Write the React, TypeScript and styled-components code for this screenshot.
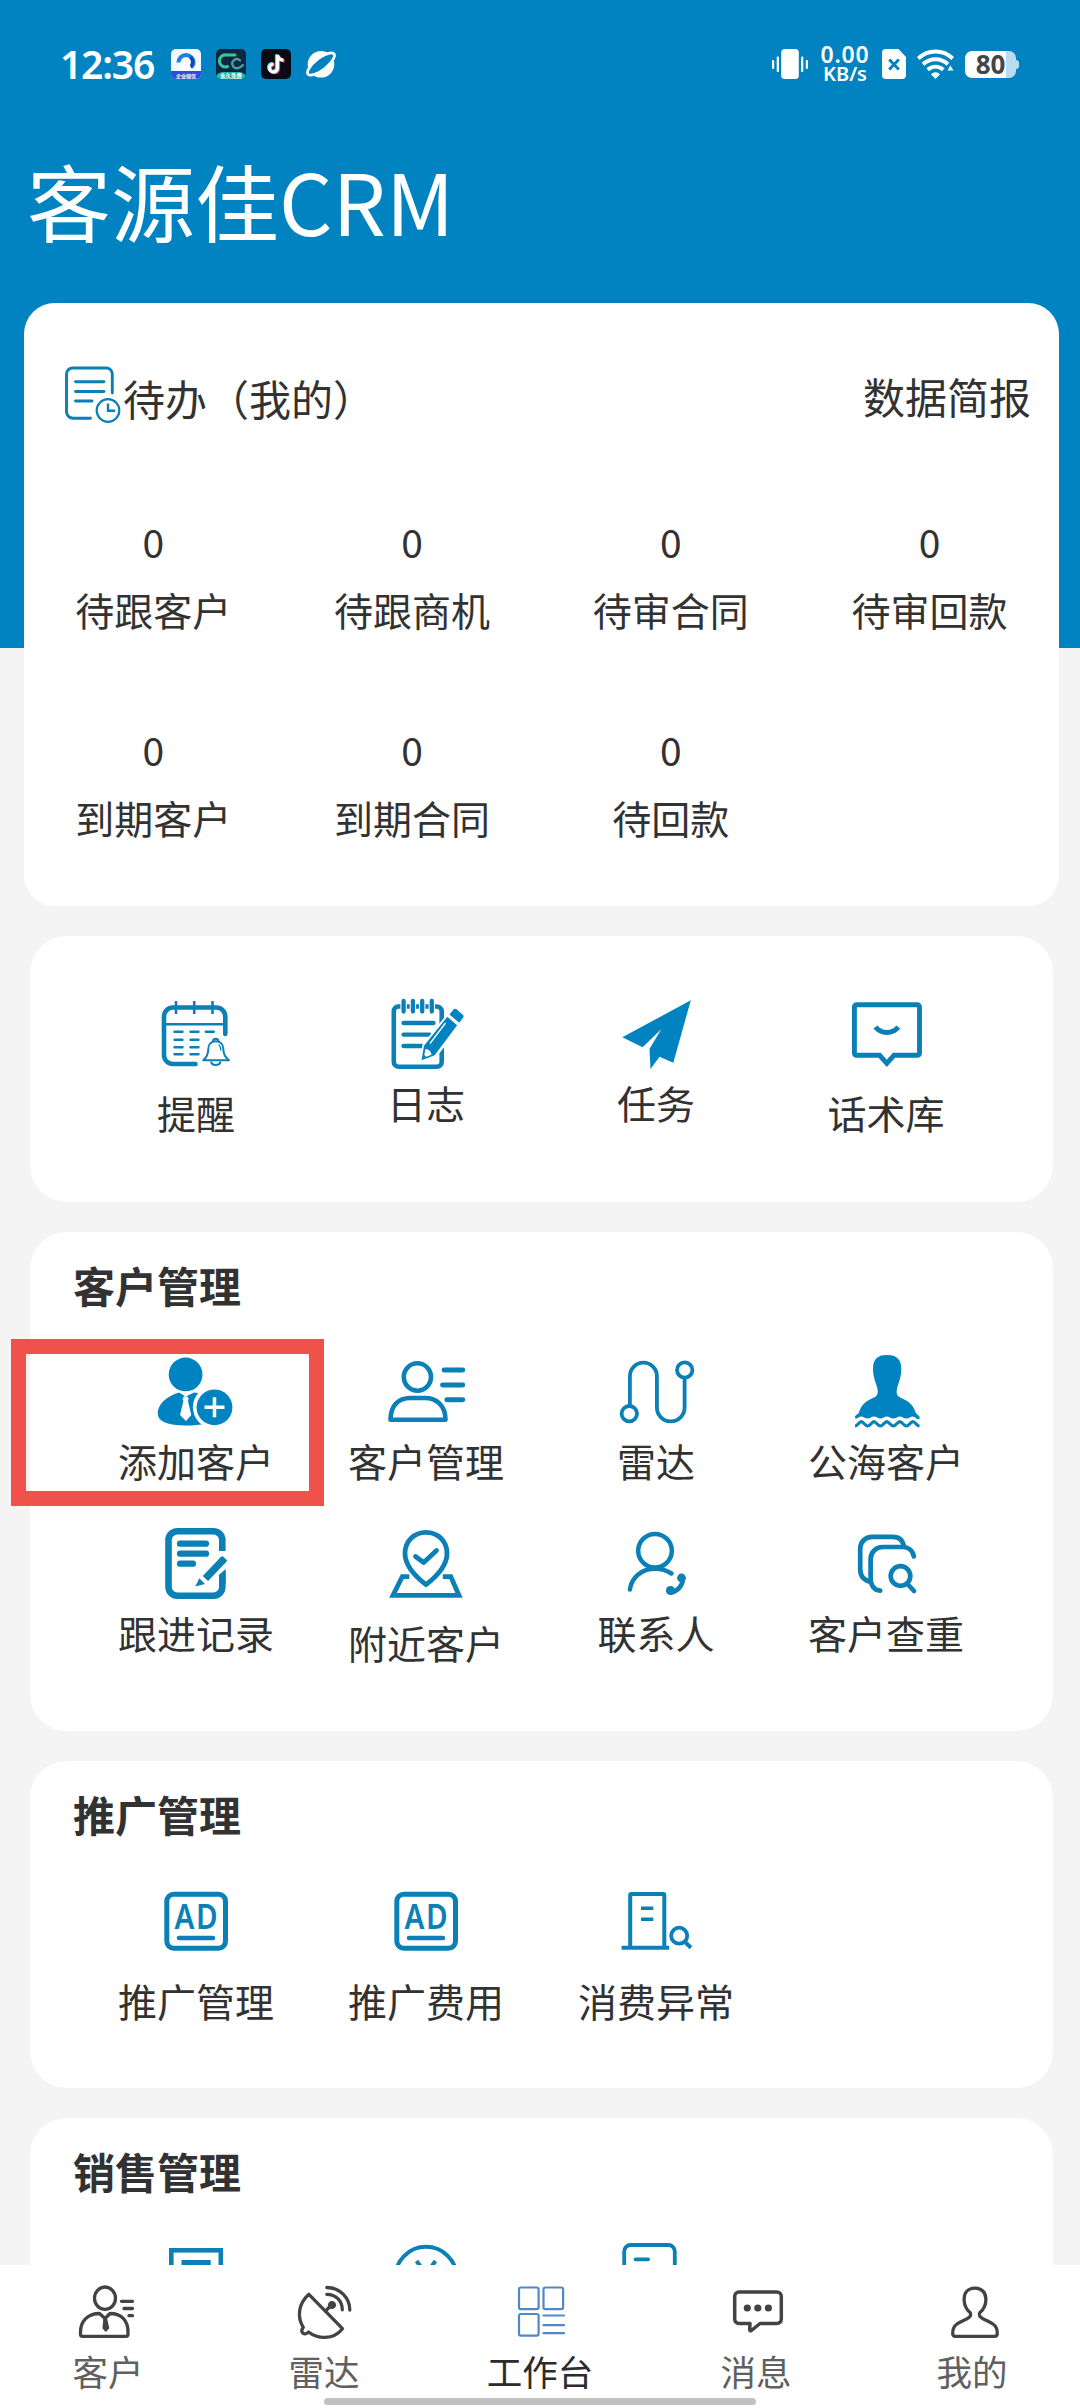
import React from 'react';
import styled, { createGlobalStyle } from 'styled-components';

const BRAND = '#0083c0';
const STROKE = '#0b80b6';
const INK = '#323232';
const TAB_INK = '#434343';

const GlobalStyle = createGlobalStyle`
  * { box-sizing: border-box; }
  body {
    margin: 0;
    font-family: 'Noto Sans CJK SC', 'Noto Sans', sans-serif;
    color: ${INK};
  }
  svg { display: block; flex: none; overflow: visible; }
`;

const Page = styled.div`
  width: 1080px;
  height: 2408px;
  display: flex;
  flex-direction: column;
  overflow: hidden;
  background: linear-gradient(${BRAND} 648px, #f4f4f4 648px);
`;

/* ---------- status bar ---------- */

const StatusBar = styled.header`
  height: 128px;
  flex: none;
  display: flex;
  align-items: center;
  justify-content: space-between;
  padding: 0 61px 0 60px;
  color: #fff;
`;

const StatusGroup = styled.div<{ $gap: number }>`
  display: flex;
  align-items: center;
  gap: ${(p) => p.$gap}px;
`;

const Clock = styled.span`
  width: 96px;
  font: 600 39px/44px 'Noto Sans', sans-serif;
  letter-spacing: -1.2px;
  white-space: nowrap;
`;

const NetSpeed = styled.div`
  width: 52px;
  display: flex;
  flex-direction: column;
  align-items: center;
  font-family: 'Liberation Sans', 'Noto Sans', sans-serif;
  font-weight: 700;
  white-space: nowrap;
`;

const NetValue = styled.span`
  font: 600 23px/20px 'Noto Sans', sans-serif;
  letter-spacing: 0.8px;
`;

const NetUnit = styled.span`
  font: 600 20px/20px 'Noto Sans', sans-serif;
`;

const Battery = styled.div`
  width: 51px;
  height: 27px;
  display: flex;
  align-items: center;
  justify-content: center;
  position: relative;
  border-radius: 7px;
  background: linear-gradient(90deg, #fff 41px, #b9dcee 41px);
  color: #454545;
  font: 700 26px/27px 'Noto Sans', sans-serif;
  margin-right: 3px;

  &::after {
    content: '';
    position: absolute;
    right: -3px;
    top: 9px;
    width: 4px;
    height: 9px;
    border-radius: 0 3px 3px 0;
    background: #b9dcee;
  }
`;

const AppTitle = styled.h1`
  height: 175px;
  flex: none;
  margin: 0;
  padding: 12px 0 0 27px;
  color: #fff;
  font-size: 84px;
  font-weight: 400;
  line-height: 120px;
`;

/* ---------- content ---------- */

const Content = styled.main`
  flex: 1;
  min-height: 0;
  overflow: hidden;
  display: flex;
  flex-direction: column;
  gap: 30px;
`;

const TodoCard = styled.section`
  flex: none;
  height: 603px;
  margin: 0 21px 0 24px;
  padding-top: 60px;
  border-radius: 31px;
  background: #fff;
`;

const TodoHeader = styled.div`
  height: 64px;
  margin-bottom: 73px;
  padding: 0 28px 0 41px;
  display: flex;
  align-items: center;
  justify-content: space-between;
  font-size: 42px;
  line-height: 60px;
`;

const TodoTitle = styled.div`
  display: flex;
  align-items: center;
  gap: 2px;
`;

const TodoText = styled.span`
  padding-top: 6px;
`;

const ReportLink = styled.a`
  padding-top: 1px;
`;

const StatGrid = styled.div`
  display: grid;
  grid-template-columns: repeat(4, 1fr);
  grid-auto-rows: 208px;
`;

const Stat = styled.div`
  display: flex;
  flex-direction: column;
  align-items: center;
  padding-top: 13px;
  gap: 13px;
`;

const StatCount = styled.span`
  font-size: 39px;
  line-height: 56px;
`;

const ItemLabel = styled.span`
  font-size: 39px;
  line-height: 54px;
  white-space: nowrap;
`;

const ToolCard = styled.section<{ $height: number }>`
  flex: none;
  height: ${(p) => p.$height}px;
  margin: 0 27px 0 30px;
  border-radius: 37px;
  background: #fff;
`;

const CardTitle = styled.h2`
  margin: 0;
  padding: 23px 0 0 43px;
  font-size: 42px;
  font-weight: 700;
  line-height: 60px;
`;

const ToolGrid = styled.div<{ $top: number }>`
  display: grid;
  grid-template-columns: repeat(4, 230px);
  grid-auto-rows: 172px;
  padding: ${(p) => p.$top}px 0 0 51px;
`;

const ToolItem = styled.div<{ $gap: number }>`
  position: relative;
  display: flex;
  flex-direction: column;
  align-items: center;
  gap: ${(p) => p.$gap}px;
`;

const Highlight = styled.div`
  position: absolute;
  left: -70px;
  top: -13px;
  width: 313px;
  height: 167px;
  border: 15px solid #ef524a;
`;

/* ---------- tab bar ---------- */

const TabBar = styled.nav`
  height: 143px;
  flex: none;
  position: relative;
  display: grid;
  grid-template-columns: repeat(5, 1fr);
  background: #fff;
`;

const Tab = styled.div<{ $active?: boolean }>`
  display: flex;
  flex-direction: column;
  align-items: center;
  padding-top: 17px;
  gap: 4px;
  color: ${(p) => (p.$active ? '#2b2b2b' : '#606060')};
  font-size: 35.5px;
  line-height: 50px;
`;

const HomeIndicator = styled.div`
  position: absolute;
  left: 324px;
  bottom: 3px;
  width: 432px;
  height: 7px;
  border-radius: 4px;
  background: #c1c1c1;
`;

/* ---------- icons ---------- */

type GlyphProps = { children: React.ReactNode; w?: number };

const ToolSvg = ({ children, w = 4.6 }: GlyphProps) => (
  <svg width="80" height="80" viewBox="0 0 80 80" fill="none" stroke={STROKE} strokeWidth={w}>
    {children}
  </svg>
);

const TabSvg = ({ children, w = 3.3 }: GlyphProps) => (
  <svg
    width="60"
    height="60"
    viewBox="0 0 60 60"
    fill="none"
    stroke={TAB_INK}
    strokeWidth={w}
    strokeLinecap="round"
    strokeLinejoin="round"
  >
    {children}
  </svg>
);

const BrowserAppIcon = () => (
  <svg width="30" height="30" viewBox="0 0 30 30">
    <clipPath id="qq"><rect width="30" height="30" rx="5" /></clipPath>
    <g clipPath="url(#qq)">
      <rect width="30" height="30" fill="#f3f9ff" />
      <path d="M7.500 13.500a7.500 7.500 0 1 1 15 0c0 2-1 3.500-2.500 4.500" fill="none" stroke="#1d7fe0" strokeWidth="4" />
      <path d="M19.500 8c3 3 3 7 0 10" fill="none" stroke="#1746b8" strokeWidth="3.500" />
      <path d="M9 20a4 4 0 0 1 3-6 4 4 0 0 1 7 2l1 5H9z" fill="#fff" />
      <path d="M0 22h30v8H0z" fill="#2c4fd8" />
      <text x="15" y="28.500" fontSize="5" fontWeight="700" fill="#fff" textAnchor="middle">企业微信</text>
    </g>
  </svg>
);

const CcAppIcon = () => (
  <svg width="30" height="30" viewBox="0 0 30 30">
    <clipPath id="cc"><rect width="30" height="30" rx="5" /></clipPath>
    <g clipPath="url(#cc)">
      <rect width="30" height="30" fill="#10263f" />
      <g fill="none" strokeLinecap="round">
        <path d="M19 6H10.500a6 6 0 1 0 1 11.500" stroke="#31c9a0" strokeWidth="3" />
        <path d="M24 11.500a4.500 4.500 0 1 0-2 7.500c2 0 4-2 5-3" stroke="#3fa3ac" strokeWidth="2.400" />
      </g>
      <path d="M0 27c2-3 4-4 8-4h14c4 0 6 1 8 4v3H0z" fill="#28b5a5" />
      <text x="15" y="28.500" fontSize="5.500" fontWeight="700" fill="#fff" textAnchor="middle">永久免费</text>
    </g>
  </svg>
);

const TikTokIcon = () => {
  const note = 'M16.500 6v13a4 4 0 1 1-4-4M16.500 6c.5 3 2.500 5 6 5.200';
  return (
    <svg width="30" height="30" viewBox="0 0 30 30">
      <rect width="30" height="30" rx="5" fill="#0a0a16" />
      <g fill="none" strokeWidth="3.200">
        <path d={note} stroke="#35d8dd" transform="translate(-1 -.7)" />
        <path d={note} stroke="#f0385d" transform="translate(1 .7)" />
        <path d={note} stroke="#fff" />
      </g>
    </svg>
  );
};

const PlanetIcon = () => (
  <svg width="30" height="30" viewBox="0 0 30 30">
    <circle cx="15" cy="15.300" r="13.300" fill="#fff" />
    <ellipse cx="15" cy="15" rx="16.500" ry="5.800" fill={BRAND} stroke="#fff" strokeWidth="2.800" transform="rotate(-38 15 15)" />
    <ellipse cx="15" cy="15" rx="12.500" ry="4.400" fill={BRAND} transform="rotate(-38 15 15)" />
  </svg>
);

const VibrateIcon = () => (
  <svg width="36" height="30" viewBox="0 0 36 30" fill="#fff">
    <rect x="9.200" width="17.600" height="30" rx="3.500" />
    <rect x="0" y="11" width="2.200" height="9" rx="1" />
    <rect x="4.700" y="7.500" width="2.300" height="15.500" rx="1" />
    <rect x="29" y="7.500" width="2.300" height="15.500" rx="1" />
    <rect x="33.800" y="11" width="2.200" height="9" rx="1" />
  </svg>
);

const SimIcon = () => (
  <svg width="24" height="30" viewBox="0 0 24 30">
    <path d="M4 0h12.500L24 8v18a4 4 0 0 1-4 4H4a4 4 0 0 1-4-4V4a4 4 0 0 1 4-4z" fill="#fff" />
    <path d="M7.200 10.500l9.600 10M16.800 10.500l-9.600 10" stroke={BRAND} strokeWidth="3" />
  </svg>
);

const WifiIcon = () => (
  <svg width="37" height="30" viewBox="0 0 37 30">
    <g fill="none" stroke="#fff" strokeWidth="3.900">
      <path d="M1.300 9.500c10-9.300 24.400-9.300 34.400 0" />
      <path d="M6 15.200c7.300-6.700 17.700-6.700 25 0" />
      <path d="M10.700 20.800c4.600-4.200 11-4.200 15.600 0" />
    </g>
    <path d="M18.500 29.500l-4-4.200c2.300-2 5.700-2 8 0z" fill="#fff" stroke="#fff" />
    <path d="M33.300 15.500l4 6.500h-7.500z" fill="#fff" stroke={BRAND} strokeWidth="1" />
  </svg>
);

const TodoIcon = () => (
  <svg width="56" height="58" viewBox="0 0 56 58" fill="none" stroke={STROKE} strokeWidth="2.900" strokeLinecap="round">
    <path d="M47.300 27V8a6 6 0 0 0-6-6H7.500a6 6 0 0 0-6 6v38a6.500 6.500 0 0 0 6.500 6.200h17.500" />
    <path d="M10.500 15.800h28.500M10.500 25.500h28.500M10.500 35h16.500" />
    <circle cx="43" cy="44.500" r="11.300" strokeWidth="2.200" />
    <path d="M43 37.500v7.300h7.200" strokeWidth="2.400" strokeLinecap="butt" />
  </svg>
);

const ReminderIcon = () => (
  <ToolSvg>
    <path d="M69.300 40V22.500a9 9 0 0 0-9-9H17a9 9 0 0 0-9 9V61a9 9 0 0 0 9 9h22.500" strokeLinecap="round" />
    <path d="M20 7v13M38.200 7v13M56.500 7v13M8 30.200h61" strokeWidth="2.600" />
    <path
      d="M18.500 37.700h8M34.500 37.700h8M49.800 37.700h8M18.500 45.700h8M34.500 45.700h8M18.500 53.300h8M34.500 53.300h8M18.500 60.300h8M34.500 60.300h8"
      strokeWidth="2.400"
      strokeLinecap="round"
    />
    <g strokeWidth="2" strokeLinejoin="round">
      <path d="M57 47.500a2.700 2.700 0 1 1 5.400 0" />
      <path d="M47.300 66.300c3.500-3 5-6 5-11.500 0-4.500 3-7.500 7.500-7.500s7.500 3 7.500 7.500c0 5.500 1.700 8.500 5.600 11.500z" />
      <path d="M55 67.500a4.800 4 0 0 0 9.500 0" />
      <path d="M62.500 50.500c1.800 1 2.300 3 2.300 6" strokeWidth="1.300" />
    </g>
  </ToolSvg>
);

const JournalIcon = () => (
  <ToolSvg>
    <path d="M10.500 12.500h40c3 0 5.200 2 5.200 5V67.700c0 3-2 5-5 5H13c-3 0-5.200-2-5.200-5V17.500c0-3 2-5 4.500-5" />
    <path d="M17.600 6v12.500M26.900 6v12.500M36.200 6v12.500M45.800 6v12.500" stroke="#fff" strokeWidth="6.400" />
    <path d="M17.600 7v10.500M26.900 7v10.500M36.200 7v10.500M45.800 7v10.500M17.500 29h30M17.500 40.700h26M17.500 52h19" strokeWidth="4.300" strokeLinecap="round" />
    <path d="M67.500 13.500L78.500 23 72 33 48.500 63 35.500 67.500 38 51 61.500 22z" fill="#fff" stroke="#fff" strokeWidth="3" />
    <path d="M63.500 20.500l4-5c1-1 2-1 3-.2l6.300 5.500c1 .8 1 1.800.4 2.800l-4 5.200z" fill={BRAND} stroke="none" />
    <path d="M61.300 22.700l9.800 8.600-22.500 30-13.100 5 2.500-14.500z" fill={BRAND} stroke="none" />
    <path d="M39.500 55c3.500.3 5.700 2.500 6 5.800l-5.500 2-1.700-1.800z" fill="#fff" stroke="none" />
    <path d="M59.500 29L44 49.500" stroke="#fff" strokeWidth="1.300" />
  </ToolSvg>
);

const TaskIcon = () => (
  <ToolSvg>
    <path d="M74.800 6.300L57.300 68.700l-13.800-6-9 12.300-1-20 11.700-19.700-18.600 18L6.300 43.300z" fill={BRAND} stroke="none" />
  </ToolSvg>
);

const ScriptIcon = () => (
  <ToolSvg w={4.9}>
    <path d="M10.400 10.800h61.100a2 2 0 0 1 2 2v46.500a2 2 0 0 1-2 2H48l-7.200 8-7.200-8H10.400a2 2 0 0 1-2-2V12.800a2 2 0 0 1 2-2z" />
    <path d="M29.500 33c5.500 7.300 17.300 7.300 22.800 0" strokeWidth="5" />
  </ToolSvg>
);

const AddCustomerIcon = () => (
  <ToolSvg>
    <g fill={BRAND} stroke="none">
      <circle cx="29.600" cy="22.500" r="16.900" />
      <path d="M23 40.500C11 44 1.700 52 1.700 61.500c0 8 10 12 28 12 8 0 14-.5 20-2V44c-3-2-7-3.200-11.500-3.500l-8.600 4z" />
    </g>
    <path d="M24 39.500l5.600 5.500 5.600-5.500z" fill="#fff" stroke="none" />
    <path d="M27.800 44.500h3.600l1.300 2.500-.8 2L35.300 63 30 69l-6-6 3.400-14-.9-2z" fill="#fff" stroke="none" />
    <circle cx="58.500" cy="55.300" r="21.600" fill="#fff" stroke="none" />
    <circle cx="58.500" cy="55.300" r="17.900" fill={BRAND} stroke="none" />
    <path d="M48.500 55.300h20M58.500 45.300v20" stroke="#fff" strokeWidth="3.500" />
  </ToolSvg>
);

const CustomerIcon = () => (
  <ToolSvg>
    <ellipse cx="31.400" cy="25" rx="13.600" ry="13.700" />
    <path d="M4.500 67.700C4.500 53 13 46 24 46h15c11 0 20.500 7 20.500 21.700z" strokeLinejoin="round" />
    <path d="M58 18h18.800M56.500 33h20.300M60.800 47.700h16" strokeWidth="4.900" strokeLinecap="round" />
  </ToolSvg>
);

const RouteIcon = () => (
  <ToolSvg w={3.8}>
    <circle cx="13.300" cy="61.700" r="7.700" />
    <circle cx="68.700" cy="18" r="7.700" />
    <path d="M13.900 53.500V24.200a13.500 13.500 0 0 1 27 0V55.500a13.850 13.850 0 0 0 27.700 0V26.500" />
  </ToolSvg>
);

const PublicSeaIcon = () => (
  <ToolSvg>
    <path
      d="M41 3c10 0 14.300 4.500 14.300 14 0 9-3.300 15-4.300 19.500-.7 3.500-.5 6.500 1.500 8 4 2.500 14 4.500 17.300 16.500l3.700 3.500v2.500c-3.500 1-4.200-2.500-6.600-2.500s-3.600 2-6.500 2-4.200-2-6.600-2-3.800 2-6.500 2-4-2-6.500-2-3.800 2-6.400 2-4-2-6.400-2-3.800 2-6.400 2-4-2-6.400-2-3.100 2.500-6.100 2V64l3.700-3c3-12 13-14 17-16.500 2-1.500 2.400-4.500 1.600-8C30.600 32 27 26 27 17 27 7.500 31 3 41 3z"
      fill={BRAND}
      stroke="none"
    />
    <path
      d="M9 74c3 0 4-4.400 6.300-4.400s3.700 4.400 6.400 4.400 4-4.400 6.300-4.400 3.700 4.400 6.400 4.400 4-4.400 6.400-4.400 3.800 4.400 6.500 4.400 4-4.400 6.500-4.400 3.800 4.400 6.600 4.400 4-4.400 6.500-4.400 3.500 4.400 6.600 4.400"
      strokeWidth="3.100"
    />
  </ToolSvg>
);

const RecordIcon = () => (
  <ToolSvg w={6.6}>
    <path d="M66.300 27V16a8.700 8.700 0 0 0-8.700-8.700H21.200A8.700 8.700 0 0 0 12.500 16v47a8.700 8.700 0 0 0 8.700 8.700h36.400a8.700 8.700 0 0 0 8.700-8.700V44" />
    <path d="M24 19.700h26M24 29.700h26M24 39.700h13" strokeWidth="6.200" strokeLinecap="round" />
    <path d="M72 18v8L46 51l-8 12h11l23-20z" fill="#fff" stroke="none" />
    <path d="M49.400 54.500L67.500 35.500" strokeWidth="7.400" strokeLinecap="butt" />
    <path d="M66.500 32l4.800 4.500-3 3-5-5z" fill={STROKE} stroke="none" />
    <path d="M43.300 54.300l5.600 5.800-9.600 2.400z" fill={STROKE} stroke="none" />
    <path d="M69.600 46.500L63 53.500V60h6.600z" fill={STROKE} stroke="none" />
  </ToolSvg>
);

const NearbyIcon = () => (
  <ToolSvg w={4.8}>
    <path d="M40 60.700C32 54.500 19 43.500 19 29.500c0-12.500 9.200-21.100 21-21.100s21 8.600 21 21.100c0 14-13 25-21 31.200z" strokeLinejoin="round" />
    <path d="M29.500 32.500l8.200 6L50.500 26.500" strokeLinecap="round" strokeLinejoin="round" />
    <path d="M23.300 52.700h-7L7 71.300h66L64.800 52.700h-8" />
  </ToolSvg>
);

const ContactIcon = () => (
  <ToolSvg w={4.500}>
    <circle cx="39" cy="26.700" r="16.800" />
    <path d="M13.900 65.500C15.500 53 26 44.700 39 44.700c6.500 0 11.500 1.500 16.500 4.800" strokeLinecap="round" />
    <path d="M67 54.500c-.5 7-5 13-12.500 14" strokeWidth="4.600" />
    <circle cx="65.500" cy="54" r="4.400" fill={STROKE} stroke="none" />
    <circle cx="54.500" cy="66.500" r="4.600" fill={STROKE} stroke="none" />
  </ToolSvg>
);

const DedupeIcon = () => (
  <ToolSvg w={4.700}>
    <path d="M58 23c-1-6.500-5-10.200-11-10.200H26A11.800 11.800 0 0 0 14.200 24.600V45c0 7 3.500 11.200 10 12.700" />
    <path d="M67.900 32.500c-1-6-5.400-9.500-11.500-9.500H36.600a12 12 0 0 0-12 12v19.500c0 7 3.500 11.500 9.600 12.200" strokeLinecap="round" />
    <circle cx="54.500" cy="52" r="9.800" />
    <path d="M61.500 60l6.500 7" strokeLinecap="round" />
  </ToolSvg>
);

const AdIcon = () => (
  <ToolSvg w={5}>
    <rect x="10.800" y="12.200" width="58.700" height="54" rx="7" />
    <text
      x="18.500"
      y="47"
      fill={STROKE}
      stroke="none"
      fontFamily="'Noto Sans', sans-serif"
      fontSize="34.500"
      fontWeight="600"
      letterSpacing="2"
      textLength="45"
      lengthAdjust="spacingAndGlyphs"
    >
      AD
    </text>
    <path d="M23 56h34" strokeWidth="4.500" strokeLinecap="round" />
  </ToolSvg>
);

const AbnormalIcon = () => (
  <ToolSvg w={4}>
    <path d="M14.200 65V13a1 1 0 0 1 1-1h32.100a1 1 0 0 1 1 1V65M5.600 65.800h47.600" />
    <path d="M25 26.300h12.300M25 37.300h12.300" strokeWidth="3.500" />
    <circle cx="63.200" cy="53.700" r="8" strokeWidth="3.800" />
    <path d="M68.500 59.500l6.500 6.300" />
  </ToolSvg>
);

const OrderIcon = () => (
  <ToolSvg>
    <rect x="15.300" y="11.300" width="49.500" height="58" />
    <path d="M25.500 23.500h29.200M25.500 37h29.200" strokeWidth="4.800" />
  </ToolSvg>
);

const MoneyIcon = () => (
  <ToolSvg w={4}>
    <circle cx="40" cy="38.500" r="30.700" />
    <path d="M30.500 22l9.500 13 9.500-13M40 35v20M30 37h20" />
  </ToolSvg>
);

const InvoiceIcon = () => (
  <ToolSvg w={3.800}>
    <rect x="8.200" y="6" width="50.600" height="62" rx="6.500" />
    <path d="M19.500 20.300h12.600M19.500 34h25" strokeLinecap="round" />
  </ToolSvg>
);

const CustomerTabIcon = () => (
  <TabSvg>
    <ellipse cx="27" cy="16.200" rx="10.500" ry="11.200" />
    <path d="M21.500 31.500C10 31.500 2.500 39 2.500 50v2.300c0 1.200.8 2 2 2H48c1.200 0 2-.8 2-2V50c0-11-6-18.500-18-18.500L27 36.500z" />
    <path d="M26 37.500h2.500l2 8.500-2.700 3-2.600-3z" fill={TAB_INK} strokeWidth="1.500" />
    <path d="M43.500 19.300h11M46 26.500h8.500M51 33.700h3.500" />
  </TabSvg>
);

const RadarTabIcon = () => (
  <TabSvg>
    <path d="M14.900 12.300L48.500 46.700C39 58.500 23.500 57 14.500 50c-2 2.500-5 2.500-6.200.5-1.200-1.800-.3-3.500 1-5.200C3 35.500 4 22 14.900 12.300z" />
    <path d="M31.500 29l5.500-5.500M32.800 12.300c9 0 15.500 6.500 15.500 15.500M32.800 5.500c13 0 23 10 23 22.500" />
    <circle cx="38" cy="23" r="3.600" fill={TAB_INK} strokeWidth="1" />
  </TabSvg>
);

const WorkbenchTabIcon = () => (
  <TabSvg w={2.200}>
    <g stroke="#5189c6">
      <rect x="9" y="5.500" width="19.600" height="21.600" rx="1.800" />
      <rect x="33.500" y="5.500" width="19.600" height="21.600" rx="1.800" />
      <rect x="9" y="32" width="19.600" height="21.600" rx="1.800" />
      <path d="M33.500 33.500h20.500M33.500 43.200h20.500M33.500 51.200h20.500" />
    </g>
  </TabSvg>
);

const MessageTabIcon = () => (
  <TabSvg w={3.500}>
    <path d="M13 10h38a4.300 4.300 0 0 1 4.300 4.300v22.900a4.300 4.300 0 0 1-4.300 4.300H34l-8.600 7c-1 .6-1.700.2-1.700-.8l.3-6.200H13a4.300 4.300 0 0 1-4.300-4.300V14.300A4.300 4.300 0 0 1 13 10z" />
    <g fill={TAB_INK} stroke="none">
      <circle cx="21.300" cy="26" r="3.600" />
      <circle cx="31.800" cy="26" r="3.600" />
      <circle cx="42.400" cy="26" r="3.600" />
    </g>
  </TabSvg>
);

const ProfileTabIcon = () => (
  <TabSvg>
    <path d="M33 6.200c-6.800 0-10.900 4.500-10.900 11 0 5.500 2 10 5.900 13.300 1 1 .8 3.500-.5 4.500-3.500 3-8 4-12.500 7-3.500 2.500-4.500 6-4.300 9.700.1 1.700 1 2.600 2.500 2.600h39.600c1.500 0 2.400-.9 2.500-2.600.2-3.700-.8-7.200-4.300-9.700-4.500-3-9-4-12.500-7-1.300-1-1.500-3.500-.5-4.500 3.900-3.300 5.900-7.800 5.900-13.300 0-6.500-4.100-11-10.900-11z" />
  </TabSvg>
);

/* ---------- data ---------- */

type Tool = { label: string; icon: React.ComponentType; low?: boolean; marked?: boolean };

const stats = ['待跟客户', '待跟商机', '待审合同', '待审回款', '到期客户', '到期合同', '待回款'];

const quickTools: Tool[] = [
  { label: '提醒', icon: ReminderIcon, low: true },
  { label: '日志', icon: JournalIcon },
  { label: '任务', icon: TaskIcon },
  { label: '话术库', icon: ScriptIcon, low: true },
];

const customerTools: Tool[] = [
  { label: '添加客户', icon: AddCustomerIcon, marked: true },
  { label: '客户管理', icon: CustomerIcon },
  { label: '雷达', icon: RouteIcon },
  { label: '公海客户', icon: PublicSeaIcon },
  { label: '跟进记录', icon: RecordIcon },
  { label: '附近客户', icon: NearbyIcon, low: true },
  { label: '联系人', icon: ContactIcon },
  { label: '客户查重', icon: DedupeIcon },
];

const promoTools: Tool[] = [
  { label: '推广管理', icon: AdIcon, low: true },
  { label: '推广费用', icon: AdIcon, low: true },
  { label: '消费异常', icon: AbnormalIcon, low: true },
];

const salesTools: Tool[] = [
  { label: '', icon: OrderIcon },
  { label: '', icon: MoneyIcon },
  { label: '', icon: InvoiceIcon },
];

const tabs = [
  { label: '客户', icon: CustomerTabIcon },
  { label: '雷达', icon: RadarTabIcon },
  { label: '工作台', icon: WorkbenchTabIcon, active: true },
  { label: '消息', icon: MessageTabIcon },
  { label: '我的', icon: ProfileTabIcon },
];

const Tools = ({ items, top }: { items: Tool[]; top: number }) => (
  <ToolGrid $top={top}>
    {items.map(({ label, icon: Icon, low, marked }, i) => (
      <ToolItem key={i} $gap={low ? 11 : 1}>
        <Icon />
        {label && <ItemLabel>{label}</ItemLabel>}
        {marked && <Highlight />}
      </ToolItem>
    ))}
  </ToolGrid>
);

export default function App() {
  return (
    <Page>
      <GlobalStyle />
      <StatusBar>
        <StatusGroup $gap={15}>
          <Clock>12:36</Clock>
          <BrowserAppIcon />
          <CcAppIcon />
          <TikTokIcon />
          <PlanetIcon />
        </StatusGroup>
        <StatusGroup $gap={11}>
          <VibrateIcon />
          <NetSpeed>
            <NetValue>0.00</NetValue>
            <NetUnit>KB/s</NetUnit>
          </NetSpeed>
          <SimIcon />
          <WifiIcon />
          <Battery>80</Battery>
        </StatusGroup>
      </StatusBar>
      <AppTitle>客源佳CRM</AppTitle>
      <Content>
        <TodoCard>
          <TodoHeader>
            <TodoTitle>
              <TodoIcon />
              <TodoText>待办（我的）</TodoText>
            </TodoTitle>
            <ReportLink>数据简报</ReportLink>
          </TodoHeader>
          <StatGrid>
            {stats.map((label) => (
              <Stat key={label}>
                <StatCount>0</StatCount>
                <ItemLabel>{label}</ItemLabel>
              </Stat>
            ))}
          </StatGrid>
        </TodoCard>
        <ToolCard $height={266}>
          <Tools items={quickTools} top={58} />
        </ToolCard>
        <ToolCard $height={499}>
          <CardTitle>客户管理</CardTitle>
          <Tools items={customerTools} top={37} />
        </ToolCard>
        <ToolCard $height={327}>
          <CardTitle>推广管理</CardTitle>
          <Tools items={promoTools} top={38} />
        </ToolCard>
        <ToolCard $height={327}>
          <CardTitle>销售管理</CardTitle>
          <Tools items={salesTools} top={38} />
        </ToolCard>
      </Content>
      <TabBar>
        {tabs.map(({ label, icon: Icon, active }) => (
          <Tab key={label} $active={active}>
            <Icon />
            {label}
          </Tab>
        ))}
        <HomeIndicator />
      </TabBar>
    </Page>
  );
}
